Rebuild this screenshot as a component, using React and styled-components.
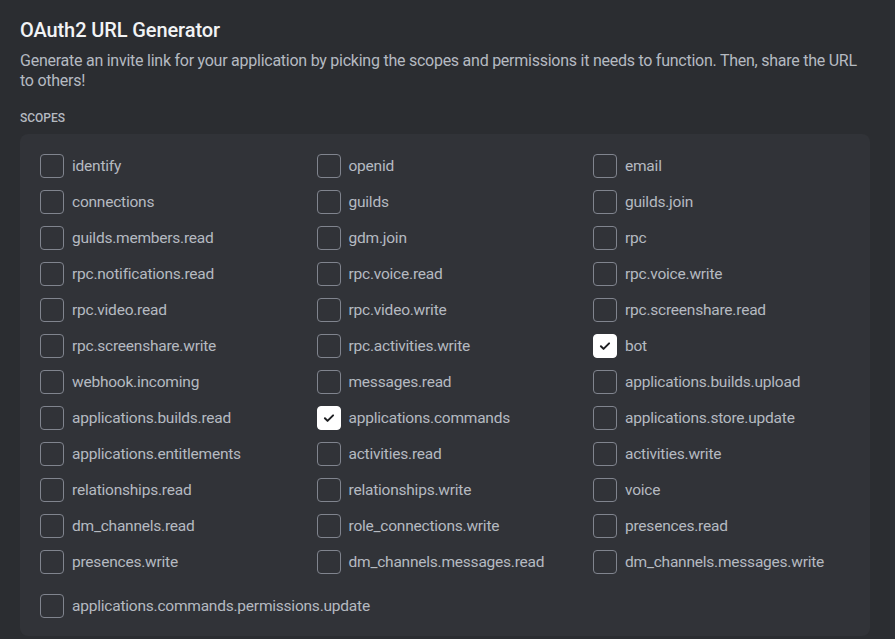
import React from 'react';
import styled, { createGlobalStyle } from 'styled-components';

const GlobalStyle = createGlobalStyle`
  html, body {
    margin: 0;
    padding: 0;
    background: #2b2d31;
  }
  body {
    font-family: Roboto, "Noto Sans", sans-serif;
    overflow: hidden;
  }
`;

const Page = styled.div`
  display: flex;
  width: 895px;
  height: 639px;
  background: #2b2d31;
  overflow: hidden;
`;

const Main = styled.div`
  flex: 1;
  padding: 18px 20px 0 20px;
  box-sizing: border-box;
`;

const ScrollTrack = styled.div`
  width: 7px;
  background: #2e3035;
`;

const Title = styled.h1`
  margin: 0;
  font-size: 20px;
  line-height: 24px;
  font-weight: 500;
  letter-spacing: -0.1px;
  color: #f2f3f5;
`;

const Description = styled.p`
  margin: 9px 0 0;
  font-size: 16px;
  line-height: 20px;
  letter-spacing: -0.25px;
  color: #b5bac1;
`;

const SectionLabel = styled.h2`
  margin: 19px 0 8px;
  font-size: 12px;
  line-height: 16px;
  font-weight: 500;
  text-transform: uppercase;
  color: #b5bac1;
`;

const Panel = styled.div`
  background: #313338;
  border-radius: 8px;
  padding: 20px 0 18px 20px;
`;

const Grid = styled.div`
  display: grid;
  grid-template-columns: repeat(3, 276.5px);
  row-gap: 12px;
`;

const FullRow = styled.div`
  margin-top: 20px;
`;

const Option = styled.label`
  display: flex;
  align-items: center;
  gap: 8px;
  height: 24px;
  font-size: 15.5px;
  line-height: 26px;
  letter-spacing: -0.22px;
  color: #b5bac1;
  white-space: nowrap;
`;

const Box = styled.span`
  display: flex;
  align-items: center;
  justify-content: center;
  width: 24px;
  height: 24px;
  box-sizing: border-box;
  border-radius: 4px;
  border: 1px solid ${p => (p.$checked ? '#ffffff' : '#80848e')};
  background: ${p => (p.$checked ? '#ffffff' : 'transparent')};
  flex-shrink: 0;
`;

const Check = () => (
  <svg width="14" height="14" viewBox="0 0 24 24">
    <path
      d="M5 12.5l4.5 4.5L19 7.5"
      fill="none"
      stroke="#1e1f22"
      strokeWidth="3.4"
      strokeLinecap="round"
      strokeLinejoin="round"
    />
  </svg>
);

const scopes = [
  'identify', 'openid', 'email',
  'connections', 'guilds', 'guilds.join',
  'guilds.members.read', 'gdm.join', 'rpc',
  'rpc.notifications.read', 'rpc.voice.read', 'rpc.voice.write',
  'rpc.video.read', 'rpc.video.write', 'rpc.screenshare.read',
  'rpc.screenshare.write', 'rpc.activities.write', 'bot',
  'webhook.incoming', 'messages.read', 'applications.builds.upload',
  'applications.builds.read', 'applications.commands', 'applications.store.update',
  'applications.entitlements', 'activities.read', 'activities.write',
  'relationships.read', 'relationships.write', 'voice',
  'dm_channels.read', 'role_connections.write', 'presences.read',
  'presences.write', 'dm_channels.messages.read', 'dm_channels.messages.write',
];

const checked = ['bot', 'applications.commands'];

const Scope = ({ name }) => {
  const on = checked.includes(name);
  return (
    <Option>
      <Box $checked={on}>{on && <Check />}</Box>
      {name}
    </Option>
  );
};

const App = () => {
  return (
    <Page>
      <GlobalStyle />
      <Main>
        <Title>OAuth2 URL Generator</Title>
        <Description>
          Generate an invite link for your application by picking the scopes and permissions it
          needs to function. Then, share the URL to others!
        </Description>
        <SectionLabel>Scopes</SectionLabel>
        <Panel>
          <Grid>
            {scopes.map(s => (
              <Scope key={s} name={s} />
            ))}
          </Grid>
          <FullRow>
            <Scope name="applications.commands.permissions.update" />
          </FullRow>
        </Panel>
      </Main>
      <ScrollTrack />
    </Page>
  );
};

export default App;
